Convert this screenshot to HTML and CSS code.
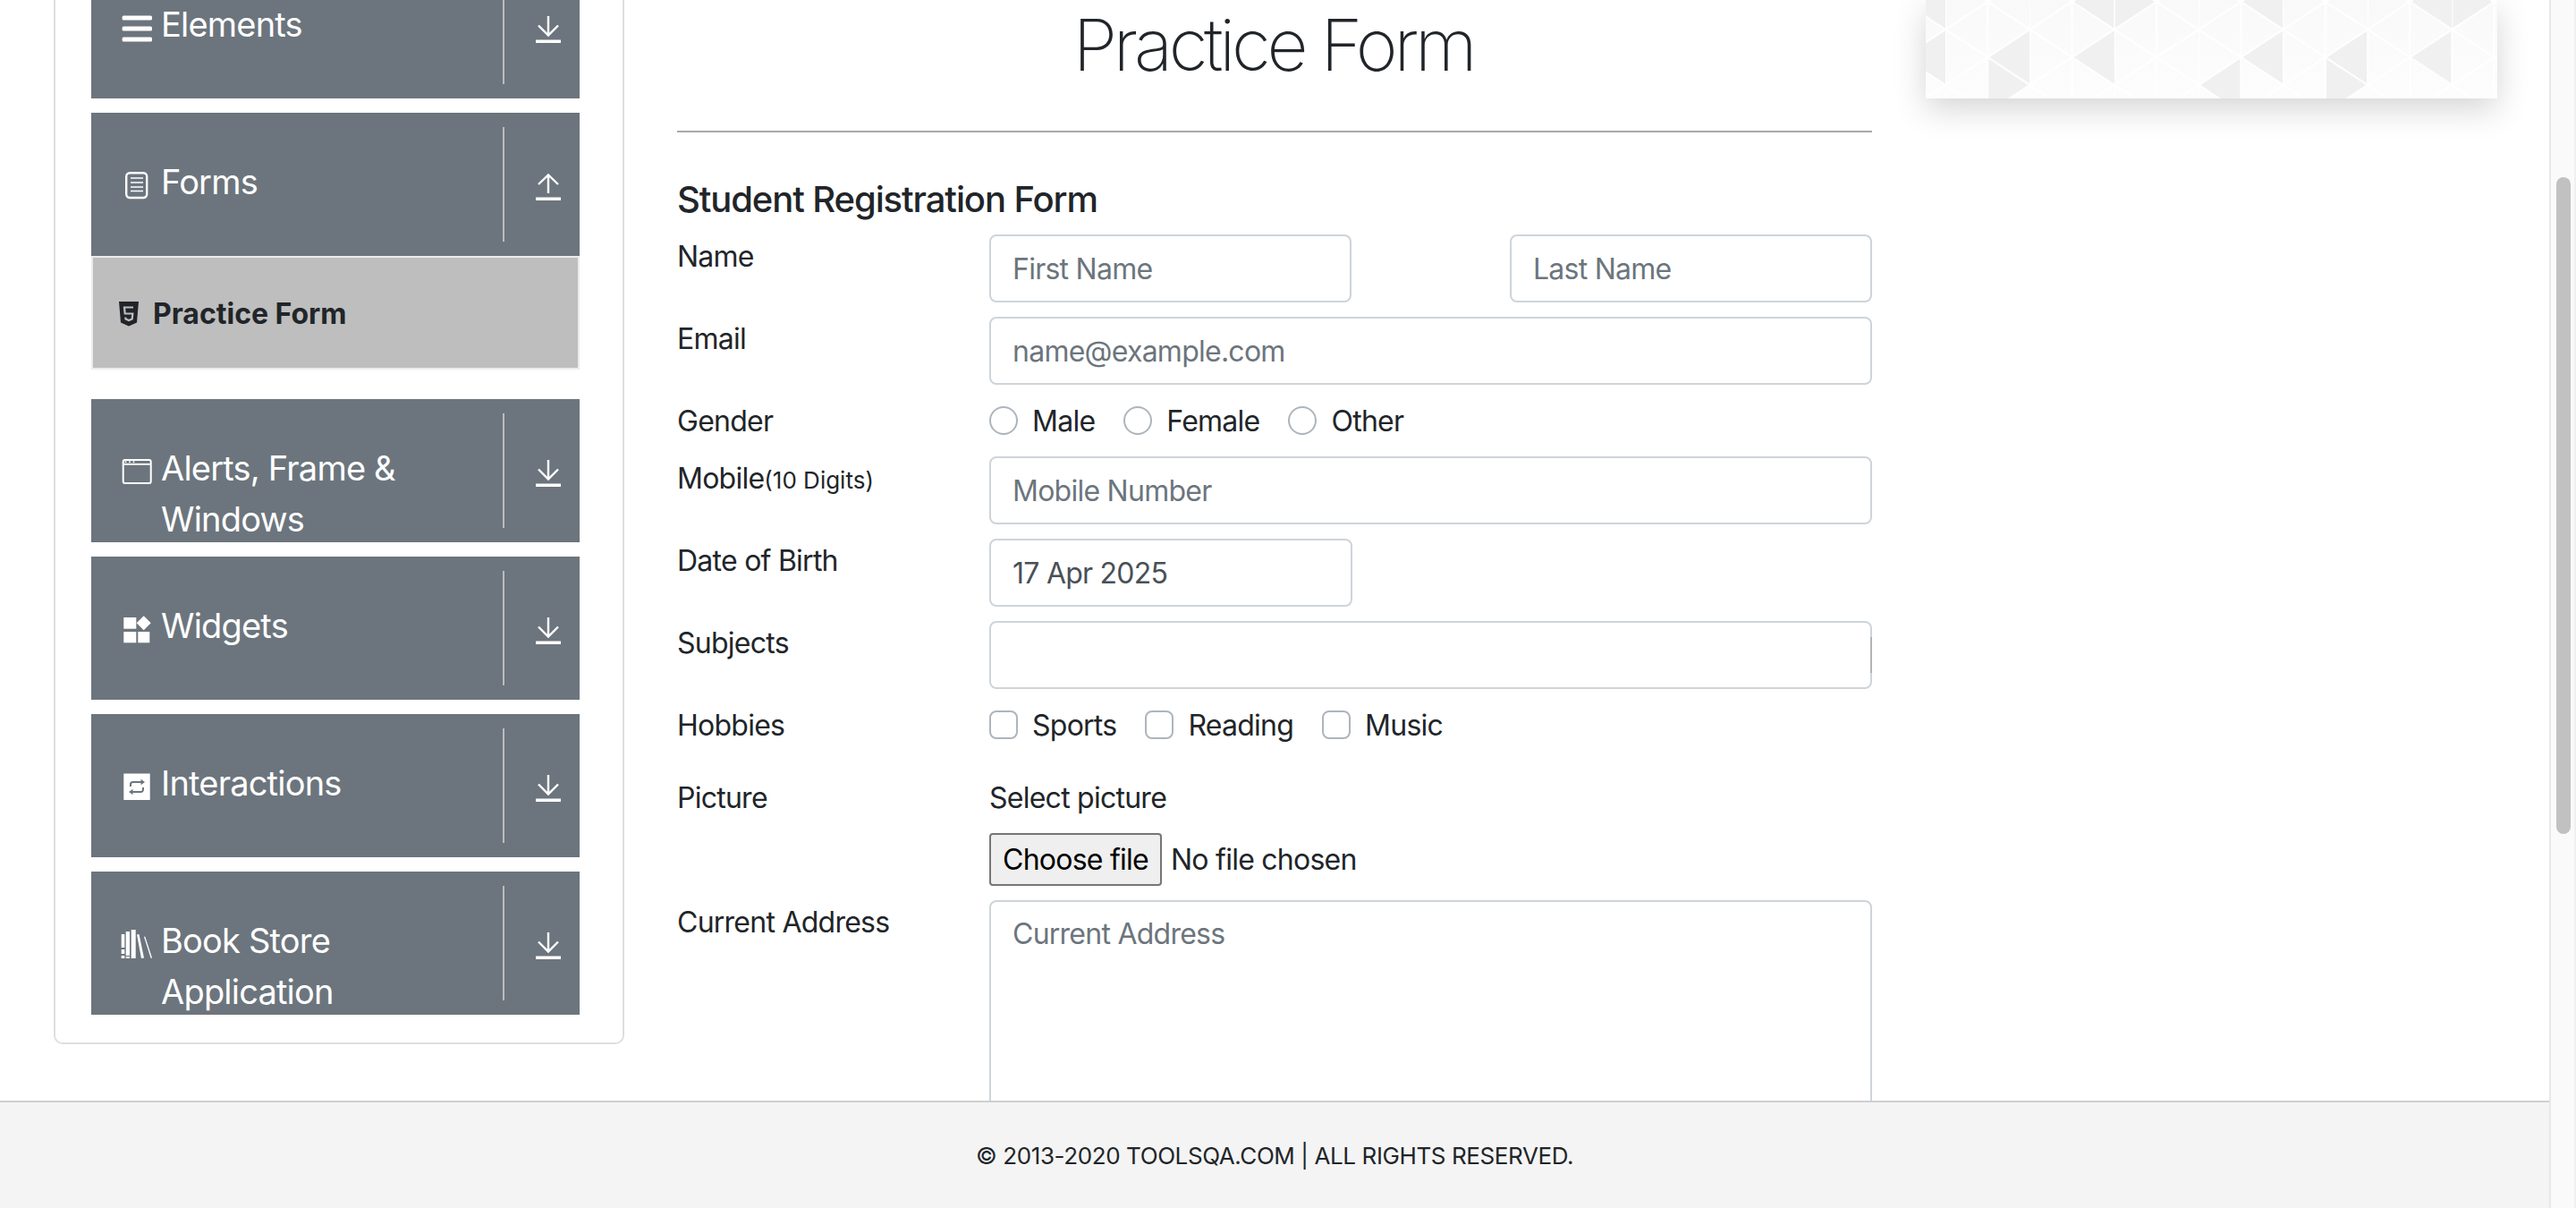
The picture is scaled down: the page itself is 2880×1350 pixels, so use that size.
FILE: index.html
```html
<!DOCTYPE html>
<html lang="en">
<head>
    <meta charset="UTF-8">
    <title>Practice Form</title>
    <link rel="stylesheet" href="styles.css">
</head>
<body>
    <svg class="defs" width="0" height="0">
        <symbol id="arrow-down" viewBox="0 0 28 30">
            <path d="M14 0V21M3 10.500L14 21.500L25 10.500" fill="none" stroke="#fff" stroke-width="2.400"/>
            <rect x="0" y="26.500" width="28" height="3.500" fill="#fff"/>
        </symbol>
        <symbol id="arrow-up" viewBox="0 0 28 30">
            <path d="M14 22V1.500M3 12L14 1.500L25 12" fill="none" stroke="#fff" stroke-width="2.400"/>
            <rect x="0" y="26.500" width="28" height="3.500" fill="#fff"/>
        </symbol>
    </svg>

    <div class="viewport">
        <div class="content">
            <aside class="sidebar">
                <div class="group-header">
                    <div class="header-text">
                        <svg class="group-icon" viewBox="0 0 40 40" fill="#fff">
                            <rect x="2.600" y="6.500" width="33.400" height="5" rx="1.500"/>
                            <rect x="2.600" y="18.500" width="33.400" height="5" rx="1.500"/>
                            <rect x="2.600" y="30.500" width="33.400" height="5" rx="1.500"/>
                        </svg>
                        <span>Elements</span>
                    </div>
                    <div class="header-right"><svg class="arrow"><use href="#arrow-down"/></svg></div>
                </div>

                <div class="group-header">
                    <div class="header-text">
                        <svg class="group-icon" viewBox="0 0 40 40" fill="none" stroke="#fff">
                            <rect x="7.200" y="6.200" width="23" height="27.800" rx="4" stroke-width="2.400"/>
                            <path d="M12 12H26M12 17H26M12 22H26M12 26.500H26" stroke-width="1.600"/>
                        </svg>
                        <span>Forms</span>
                    </div>
                    <div class="header-right"><svg class="arrow"><use href="#arrow-up"/></svg></div>
                </div>
                <ul class="menu-list">
                    <li class="menu-item">
                        <svg class="html-icon" viewBox="0 0 24 28">
                            <path d="M1 0H23L21 23.500L12 27.500L3 23.500Z" fill="#212529"/>
                            <path d="M17 6.500H7L7.700 13.500H16.300L15.700 19.500L12 21L8.500 19.500L8.300 17.500" fill="none" stroke="#bebebe" stroke-width="2.200"/>
                        </svg>
                        <span>Practice Form</span>
                    </li>
                </ul>

                <div class="group-header">
                    <div class="header-text">
                        <svg class="group-icon" viewBox="0 0 40 40" fill="none" stroke="#fff">
                            <rect x="3.700" y="7" width="31" height="26" rx="2" stroke-width="2"/>
                            <path d="M3.700 11.800H34.700" stroke-width="1.800"/>
                            <circle cx="6.500" cy="9.300" r="1" fill="#fff" stroke="none"/>
                            <circle cx="11" cy="9.300" r="1" fill="#fff" stroke="none"/>
                            <circle cx="15.500" cy="9.300" r="1" fill="#fff" stroke="none"/>
                        </svg>
                        <span>Alerts, Frame &amp; Windows</span>
                    </div>
                    <div class="header-right"><svg class="arrow"><use href="#arrow-down"/></svg></div>
                </div>

                <div class="group-header">
                    <div class="header-text">
                        <svg class="group-icon" viewBox="0 0 40 40" fill="#fff">
                            <rect x="4.300" y="7" width="14" height="12.700"/>
                            <rect x="4.300" y="23" width="14" height="12.300"/>
                            <rect x="20.300" y="23" width="13" height="12.300"/>
                            <path d="M26.700 5.300L34.700 13.300L26.700 21.300L18.700 13.300Z"/>
                        </svg>
                        <span>Widgets</span>
                    </div>
                    <div class="header-right"><svg class="arrow"><use href="#arrow-down"/></svg></div>
                </div>

                <div class="group-header">
                    <div class="header-text">
                        <svg class="group-icon" viewBox="0 0 40 40">
                            <rect x="4.300" y="5.500" width="29.400" height="29.500" fill="#fff"/>
                            <path d="M12 20V17.500A2.500 2.500 0 0 1 14.500 15H24.500M26 21V23.500A2.500 2.500 0 0 1 23.500 26H13.500" fill="none" stroke="#6c757d" stroke-width="2"/>
                            <path d="M23.500 11.800L28 15L23.500 18.200ZM14.500 22.800L10 26L14.500 29.200Z" fill="#6c757d"/>
                        </svg>
                        <span>Interactions</span>
                    </div>
                    <div class="header-right"><svg class="arrow"><use href="#arrow-down"/></svg></div>
                </div>

                <div class="group-header">
                    <div class="header-text">
                        <svg class="group-icon" viewBox="0 0 40 40" fill="#fff">
                            <path d="M1.700 9H5.300V24H1.700ZM1.700 26H5.300V31H1.700ZM1.700 33H5.300V36H1.700Z"/>
                            <path d="M6.700 6H11V33H6.700ZM6.700 34H11V36H6.700Z"/>
                            <path d="M12.700 4H17.700V36H12.700Z"/>
                            <path d="M19 9.500L21.500 9L27 35.500L24 36Z"/>
                            <path d="M27 12L28.200 11.600L36 35.500L34.700 36Z"/>
                        </svg>
                        <span>Book Store Application</span>
                    </div>
                    <div class="header-right"><svg class="arrow"><use href="#arrow-down"/></svg></div>
                </div>
            </aside>

            <main class="main">
                <h1 class="page-title">Practice Form</h1>
                <hr class="title-rule">
                <h5 class="form-title">Student Registration Form</h5>

                <form class="form">
                    <div class="row">
                        <label class="row-label">Name</label>
                        <div class="name-fields">
                            <input class="form-control short" type="text" placeholder="First Name">
                            <input class="form-control short" type="text" placeholder="Last Name">
                        </div>
                    </div>
                    <div class="row">
                        <label class="row-label">Email</label>
                        <input class="form-control" type="text" placeholder="name@example.com">
                    </div>
                    <div class="row">
                        <label class="row-label">Gender</label>
                        <div class="options">
                            <label class="option"><input class="radio" type="radio" name="gender">Male</label>
                            <label class="option"><input class="radio" type="radio" name="gender">Female</label>
                            <label class="option"><input class="radio" type="radio" name="gender">Other</label>
                        </div>
                    </div>
                    <div class="row">
                        <label class="row-label">Mobile<small class="hint">(10 Digits)</small></label>
                        <input class="form-control" type="text" placeholder="Mobile Number">
                    </div>
                    <div class="row">
                        <label class="row-label">Date of Birth</label>
                        <input class="form-control dob" type="text" value="17 Apr 2025">
                    </div>
                    <div class="row">
                        <label class="row-label">Subjects</label>
                        <div class="subjects"><span class="subjects-grip"></span></div>
                    </div>
                    <div class="row row-hobbies">
                        <label class="row-label">Hobbies</label>
                        <div class="options">
                            <label class="option"><input class="check" type="checkbox">Sports</label>
                            <label class="option"><input class="check" type="checkbox">Reading</label>
                            <label class="option"><input class="check" type="checkbox">Music</label>
                        </div>
                    </div>
                    <div class="row">
                        <label class="row-label">Picture</label>
                        <div>
                            <div class="file-title">Select picture</div>
                            <div class="file-field">
                                <button class="file-btn" type="button">Choose file</button>
                                <span>No file chosen</span>
                            </div>
                        </div>
                    </div>
                    <div class="row">
                        <label class="row-label">Current Address</label>
                        <textarea class="form-control address" placeholder="Current Address"></textarea>
                    </div>
                </form>
            </main>

            <div class="ad">
                <svg class="ad-pattern" width="639" height="110" viewBox="0 0 639 110">
                    <defs>
                        <pattern id="lattice" width="94.400" height="62" patternUnits="userSpaceOnUse" x="22" y="33">
                            <path d="M0 0L47.200 31L94.400 0M0 62L47.200 31L94.400 62M0 0V62M47.200 0V62" fill="none" stroke="#fff" stroke-width="2"/>
                        </pattern>
                        <linearGradient id="fade" x1="0" y1="0" x2="0" y2="1">
                            <stop offset="0" stop-color="#f9f9f9"/>
                            <stop offset="1" stop-color="#fdfdfd"/>
                        </linearGradient>
                    </defs>
                    <rect width="639" height="110" fill="url(#fade)"/>
                    <g fill="#f0f0f0">
                        <path d="M-25 65L22 33V95Z"/>
                        <path d="M69 65L116 33V95Z"/>
                        <path d="M163 65L211 33V95Z"/>
                        <path d="M353 65L399 33V95Z"/>
                        <path d="M447 65L493 33V95Z"/>
                        <path d="M541 65L587 33V95Z"/>
                        <path d="M69 65L116 95L69 125Z"/>
                        <path d="M307 95L352 65V125Z"/>
                        <path d="M447 65L493 95L447 125Z"/>
                        <path d="M163 3L210 -30V33Z"/>
                        <path d="M258 3L211 -30V33Z"/>
                        <path d="M353 3L399 -30V33Z"/>
                        <path d="M541 3L587 -30V33Z"/>
                        <path d="M634 3L587 -30V33Z"/>
                        <path d="M-25 3L22 -30V33Z"/>
                    </g>
                    <rect width="639" height="110" fill="url(#lattice)"/>
                </svg>
            </div>
        </div>

        <footer class="footer">© 2013-2020 TOOLSQA.COM | ALL RIGHTS RESERVED.</footer>
    </div>

    <div class="scrollbar"><div class="scrollbar-thumb"></div></div>
</body>
</html>
```

FILE: styles.css
```css
* {
    box-sizing: border-box;
}

html, body {
    margin: 0;
    height: 1350px;
    overflow: hidden;
}

body {
    display: flex;
    font-family: Inter, "Liberation Sans", sans-serif;
    font-size: 32px;
    line-height: 48px;
    letter-spacing: -0.75px;
    color: #212529;
    background-color: #fff;
}

.defs {
    position: absolute;
}

.viewport {
    flex: 1;
    min-width: 0;
    display: flex;
    flex-direction: column;
}

.content {
    flex: 1;
    min-height: 0;
    display: flex;
    align-items: flex-start;
    padding-left: 60px;
    overflow: hidden;
}

/* left menu */
.sidebar {
    flex: none;
    width: 638px;
    margin-top: -50px;
    padding: 0 48px 15px 40px;
    border: 2px solid #dfdfdf;
    border-top: none;
    border-radius: 0 0 10px 10px;
}

.group-header {
    height: 160px;
    margin-bottom: 16px;
    padding: 16px 0;
    display: flex;
    background-color: #6c757d;
    color: #fff;
    overflow: hidden;
}

.header-text {
    flex: 1;
    min-width: 0;
    display: flex;
    align-items: flex-start;
    padding: 33px 30px 0 32px;
    font-size: 38px;
    line-height: 57px;
    letter-spacing: -0.8px;
}

.group-icon {
    flex: none;
    width: 40px;
    height: 40px;
    margin: 12px 6px 0 0;
}

.header-right {
    flex: none;
    width: 86px;
    padding: 6px 0 0 14px;
    display: flex;
    align-items: center;
    justify-content: center;
    border-left: 2px solid #bcbcbc;
}

.arrow {
    width: 28px;
    height: 30px;
}

.menu-list {
    list-style: none;
    margin: -16px 0 33px;
    padding: 0;
}

.menu-item {
    height: 127px;
    padding: 2px 0 0 28px;
    display: flex;
    align-items: center;
    background-color: #bebebe;
    border: 2px solid #e9ecef;
    font-weight: 700;
    letter-spacing: 0;
}

.html-icon {
    flex: none;
    width: 24px;
    height: 28px;
    margin-right: 15px;
}

/* form */
.main {
    flex: none;
    width: 1336px;
    margin-left: 59px;
}

.page-title {
    margin: 0;
    padding: 2px 3px 0 0;
    font-size: 80px;
    line-height: 96px;
    font-weight: 200;
    letter-spacing: -4.3px;
    text-align: center;
}

.title-rule {
    margin: 48px 0 51px;
    border: none;
    border-top: 2px solid #a9a9a9;
}

.form-title {
    margin: 0 0 15px;
    font-size: 40px;
    line-height: 48px;
    font-weight: 500;
    letter-spacing: -1.1px;
}

.row {
    display: grid;
    grid-template-columns: 349px 1fr;
    margin-bottom: 16px;
}

.row-hobbies {
    margin-bottom: 33px;
}

.row-label {
    display: block;
    height: 48px;
    padding-top: 1px;
}

.hint {
    font-size: 26px;
    letter-spacing: 0;
}

.form-control {
    display: block;
    width: 100%;
    height: 76px;
    padding: 12px 24px;
    border: 2px solid #ced4da;
    border-radius: 8px;
    font: inherit;
    letter-spacing: inherit;
    color: #495057;
    background-color: #fff;
    outline: none;
}

.form-control::placeholder {
    color: #6c757d;
    opacity: 1;
}

.short {
    width: 405px;
}

.dob {
    width: 406px;
}

.name-fields {
    display: flex;
    justify-content: space-between;
}

.subjects {
    height: 76px;
    border: 2px solid #ced4da;
    border-radius: 8px;
    display: flex;
    align-items: center;
    justify-content: flex-end;
}

.subjects-grip {
    width: 2px;
    height: 40px;
    margin-right: -2px;
    background-color: #b3b3b3;
}

.options {
    display: flex;
    gap: 32px;
    height: 48px;
}

.option {
    display: flex;
    align-items: center;
    padding-top: 2px;
}

.radio, .check {
    appearance: none;
    flex: none;
    width: 32px;
    height: 32px;
    margin: -2px 16px 0 0;
    border: 2px solid #adb5bd;
    background-color: #fff;
}

.radio {
    border-radius: 50%;
}

.check {
    border-radius: 8px;
}

.file-title {
    height: 48px;
    margin-bottom: 16px;
    padding-top: 1px;
}

.file-field {
    display: flex;
    align-items: center;
    gap: 10px;
    height: 59px;
}

.file-btn {
    width: 193px;
    height: 59px;
    padding: 0;
    border: 2px solid #767676;
    border-radius: 4px;
    font: inherit;
    letter-spacing: inherit;
    color: #000;
    background-color: #efefef;
}

.address {
    height: 320px;
    resize: none;
}

/* top right banner */
.ad {
    flex: none;
    width: 639px;
    height: 110px;
    margin-left: 60px;
    box-shadow: 0 12px 36px rgba(0,0,0,0.17);
}

.ad-pattern {
    display: block;
}

/* footer */
.footer {
    position: relative;
    flex: none;
    height: 120px;
    padding-top: 2px;
    display: flex;
    align-items: center;
    justify-content: center;
    background-color: #f4f4f4;
    border-top: 2px solid #cfcfcf;
    font-size: 26px;
    letter-spacing: -0.4px;
}

/* page scrollbar */
.scrollbar {
    flex: none;
    width: 30px;
    padding: 198px 4px 0 6px;
    background-color: #fafafa;
    border-left: 2px solid #e8e8e8;
    border-right: 2px solid #f0f0f0;
}

.scrollbar-thumb {
    width: 16px;
    height: 734px;
    border-radius: 8px;
    background-color: #c1c1c1;
}
```
